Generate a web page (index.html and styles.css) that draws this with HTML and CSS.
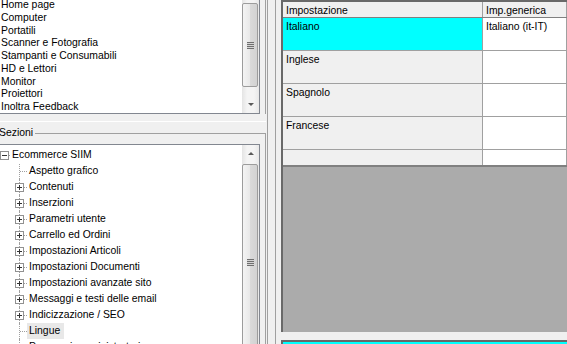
FILE: index.html
```html
<!DOCTYPE html>
<html lang="it">
<head>
    <meta charset="UTF-8">
    <title>Impostazioni lingue</title>
    <link rel="stylesheet" href="styles.css">
</head>
<body>
    <div class="window">
        <div class="left">
            <div class="cat-panel">
                <div class="listbox">
                    <ul class="list">
                        <li>Home page</li>
                        <li>Computer</li>
                        <li>Portatili</li>
                        <li>Scanner e Fotografia</li>
                        <li>Stampanti e Consumabili</li>
                        <li>HD e Lettori</li>
                        <li>Monitor</li>
                        <li>Proiettori</li>
                        <li>Inoltra Feedback</li>
                    </ul>
                    <div class="vscroll">
                        <div class="thumb thumb-top"><span class="grip"></span></div>
                        <div class="track"></div>
                        <div class="arrow arrow-down"></div>
                    </div>
                </div>
            </div>
            <div class="sep"></div>
            <fieldset class="group">
                <legend>Sezioni</legend>
                <div class="tree-box">
                    <div class="tree">
                        <div class="node root">
                            <span class="gutter"><svg width="9" height="9" viewBox="0 0 9 9"><rect x="0.5" y="0.5" width="8" height="8" fill="#fff" stroke="#919191"/><path d="M2 4.5h5" stroke="#333"/></svg></span>
                            <span class="label">Ecommerce SIIM</span>
                        </div>
                        <div class="node first"><span class="gutter leaf"></span><span class="label">Aspetto grafico</span></div>
                        <div class="node"><span class="gutter"><svg width="9" height="9" viewBox="0 0 9 9"><rect x="0.5" y="0.5" width="8" height="8" fill="#fff" stroke="#919191"/><path d="M2 4.5h5M4.5 2v5" stroke="#333"/></svg></span><span class="label">Contenuti</span></div>
                        <div class="node"><span class="gutter"><svg width="9" height="9" viewBox="0 0 9 9"><rect x="0.5" y="0.5" width="8" height="8" fill="#fff" stroke="#919191"/><path d="M2 4.5h5M4.5 2v5" stroke="#333"/></svg></span><span class="label">Inserzioni</span></div>
                        <div class="node"><span class="gutter"><svg width="9" height="9" viewBox="0 0 9 9"><rect x="0.5" y="0.5" width="8" height="8" fill="#fff" stroke="#919191"/><path d="M2 4.5h5M4.5 2v5" stroke="#333"/></svg></span><span class="label">Parametri utente</span></div>
                        <div class="node"><span class="gutter"><svg width="9" height="9" viewBox="0 0 9 9"><rect x="0.5" y="0.5" width="8" height="8" fill="#fff" stroke="#919191"/><path d="M2 4.5h5M4.5 2v5" stroke="#333"/></svg></span><span class="label">Carrello ed Ordini</span></div>
                        <div class="node"><span class="gutter"><svg width="9" height="9" viewBox="0 0 9 9"><rect x="0.5" y="0.5" width="8" height="8" fill="#fff" stroke="#919191"/><path d="M2 4.5h5M4.5 2v5" stroke="#333"/></svg></span><span class="label">Impostazioni Articoli</span></div>
                        <div class="node"><span class="gutter"><svg width="9" height="9" viewBox="0 0 9 9"><rect x="0.5" y="0.5" width="8" height="8" fill="#fff" stroke="#919191"/><path d="M2 4.5h5M4.5 2v5" stroke="#333"/></svg></span><span class="label">Impostazioni Documenti</span></div>
                        <div class="node"><span class="gutter"><svg width="9" height="9" viewBox="0 0 9 9"><rect x="0.5" y="0.5" width="8" height="8" fill="#fff" stroke="#919191"/><path d="M2 4.5h5M4.5 2v5" stroke="#333"/></svg></span><span class="label">Impostazioni avanzate sito</span></div>
                        <div class="node"><span class="gutter"><svg width="9" height="9" viewBox="0 0 9 9"><rect x="0.5" y="0.5" width="8" height="8" fill="#fff" stroke="#919191"/><path d="M2 4.5h5M4.5 2v5" stroke="#333"/></svg></span><span class="label">Messaggi e testi delle email</span></div>
                        <div class="node"><span class="gutter"><svg width="9" height="9" viewBox="0 0 9 9"><rect x="0.5" y="0.5" width="8" height="8" fill="#fff" stroke="#919191"/><path d="M2 4.5h5M4.5 2v5" stroke="#333"/></svg></span><span class="label">Indicizzazione / SEO</span></div>
                        <div class="node"><span class="gutter leaf"></span><span class="label selected">Lingue</span></div>
                        <div class="node"><span class="gutter leaf"></span><span class="label">Permessi amministratori</span></div>
                    </div>
                    <div class="vscroll">
                        <div class="arrow arrow-up"></div>
                        <div class="thumb thumb-tree"><span class="grip"></span></div>
                    </div>
                </div>
            </fieldset>
        </div>
        <div class="splitter"></div>
        <div class="right">
            <div class="grid">
                <table class="grid-table">
                    <thead>
                        <tr>
                            <th class="col-name">Impostazione</th>
                            <th>Imp.generica</th>
                        </tr>
                    </thead>
                    <tbody>
                        <tr>
                            <td class="col-name current">Italiano</td>
                            <td>Italiano (it-IT)</td>
                        </tr>
                        <tr>
                            <td class="col-name">Inglese</td>
                            <td></td>
                        </tr>
                        <tr>
                            <td class="col-name">Spagnolo</td>
                            <td></td>
                        </tr>
                        <tr>
                            <td class="col-name">Francese</td>
                            <td></td>
                        </tr>
                        <tr class="new-row">
                            <td class="col-name"></td>
                            <td></td>
                        </tr>
                    </tbody>
                </table>
                <div class="grid-empty"></div>
            </div>
            <div class="detail"></div>
        </div>
    </div>
</body>
</html>
```

FILE: styles.css
```css
body {
    margin: 0;
    background-color: #f0f0f0;
    font-family: "Liberation Sans", Arial, sans-serif;
    font-size: 10.4px;
    color: #000;
    overflow: hidden;
}
.window {
    display: flex;
    height: 344px;
    overflow: hidden;
}

/* left column */
.left {
    width: 267px;
    flex: none;
    display: flex;
    flex-direction: column;
    overflow: hidden;
}
.cat-panel {
    width: 265px;
    border-right: 1px solid #a0a0a0;
}
.listbox {
    display: flex;
    width: 259px;
    height: 113px;
    background-color: #fff;
    border-right: 1px solid #828790;
    border-bottom: 1px solid #828790;
}
.list {
    flex: 1;
    list-style: none;
    margin: -1px 0 0;
    padding: 0 0 0 1px;
    line-height: 12.75px;
    white-space: nowrap;
    overflow: hidden;
}
.sep {
    height: 7px;
    width: 266px;
    flex: none;
    border-bottom: 1px solid #fff;
}
.group {
    flex: none;
    margin: 5px 0 0;
    padding: 5px 0 0;
    border: none;
    border-top: 1px solid #a0a0a0;
    border-right: 1px solid #a0a0a0;
    width: 266px;
    box-sizing: border-box;
}
.group legend {
    padding: 0 2px 0 0;
    margin-left: -1px;
    line-height: 12px;
}
.tree-box {
    display: flex;
    width: 259px;
    height: 200px;
    background-color: #fff;
    border-top: 1px solid #828790;
    border-right: 1px solid #828790;
    overflow: hidden;
}
.tree {
    flex: 1;
    padding-top: 2px;
    overflow: hidden;
}
.node {
    display: flex;
    align-items: center;
    height: 16px;
    padding-left: 11px;
    white-space: nowrap;
}
.node.root {
    padding-left: 0;
}
.gutter {
    position: relative;
    width: 16px;
    height: 16px;
    flex: none;
}
.root .gutter {
    width: 10px;
}
.gutter svg {
    position: absolute;
    left: 4px;
    top: 4px;
    z-index: 1;
}
.root .gutter svg {
    left: 0;
}
.gutter::before {
    content: "";
    position: absolute;
    left: 8px;
    top: 0;
    bottom: 0;
    border-left: 1px dotted #a0a0a0;
}
.node.first .gutter::before {
    top: 1px;
}
.gutter::after {
    content: "";
    position: absolute;
    left: 9px;
    right: 0;
    top: 8px;
    border-top: 1px dotted #a0a0a0;
}
.root .gutter::before {
    display: none;
}
.label {
    padding: 0 2px;
    line-height: 16px;
}
.label.selected {
    background-color: #e8e8e8;
    padding-right: 4px;
}

/* scrollbars */
.vscroll {
    width: 17px;
    flex: none;
    display: flex;
    flex-direction: column;
    background: linear-gradient(to right, #e4e4e4, #f4f4f4 30%, #f4f4f4 70%, #e8e8e8);
}
.track {
    flex: 1;
}
.arrow {
    height: 17px;
    flex: none;
    display: flex;
    align-items: center;
    justify-content: center;
}
.arrow::before {
    content: "";
    border-left: 3px solid transparent;
    border-right: 3px solid transparent;
}
.arrow-down::before {
    border-top: 3px solid #5a5a5a;
}
.arrow-up::before {
    border-bottom: 3px solid #5a5a5a;
}
.thumb {
    flex: none;
    margin: 0 1px 0 0;
    border: 1px solid #9c9c9c;
    border-radius: 2px;
    background: linear-gradient(to right, #f4f4f4, #e8e8e8 50%, #dadada 51%, #d2d2d2);
    display: flex;
    justify-content: center;
}
.thumb-top {
    margin-top: 3px;
    height: 82px;
    align-items: center;
}
.thumb-tree {
    margin-top: 2px;
    height: 220px;
    align-items: flex-start;
}
.grip {
    width: 7px;
    height: 7px;
    background: repeating-linear-gradient(to bottom, #6f6f6f 0, #6f6f6f 1px, #d4d4d4 1px, #d4d4d4 2px);
}
.thumb-tree .grip {
    margin-top: 94px;
}

.splitter {
    width: 7px;
    flex: none;
    border-left: 1px solid #a0a0a0;
    border-right: 1px solid #a0a0a0;
}

/* right side: grid */
.right {
    flex: 1;
    min-width: 0;
    padding-left: 5px;
    display: flex;
    flex-direction: column;
}
.grid {
    height: 332px;
    flex: none;
    display: flex;
    flex-direction: column;
    background-color: #ababab;
    border-top: 2px solid #696969;
    border-left: 2px solid #696969;
    box-sizing: border-box;
    overflow: hidden;
}
.grid-table {
    border-collapse: collapse;
    width: 100%;
    table-layout: fixed;
    line-height: 13px;
}
.grid-table th,
.grid-table td {
    text-align: left;
    vertical-align: top;
    font-weight: normal;
    padding: 2px 3px 0;
    border-right: 1px solid #a0a0a0;
    border-bottom: 1px solid #a0a0a0;
    background-color: #fff;
    white-space: nowrap;
}
.grid-table th {
    height: 13px;
    background-color: #f0f0f0;
    border-bottom-color: #808080;
}
.grid-table td {
    height: 30px;
}
.grid-table .col-name {
    width: 193px;
    background-color: #f0f0f0;
}
.grid-table .current {
    background-color: #00ffff;
}
.grid-table .new-row td {
    height: 13px;
    border-bottom: 2px solid #808080;
}
.grid-empty {
    flex: 1;
}
.detail {
    margin-top: 8px;
    flex: 1;
    border-top: 2px solid #696969;
    border-left: 2px solid #696969;
    background-color: #00ffff;
}
```
